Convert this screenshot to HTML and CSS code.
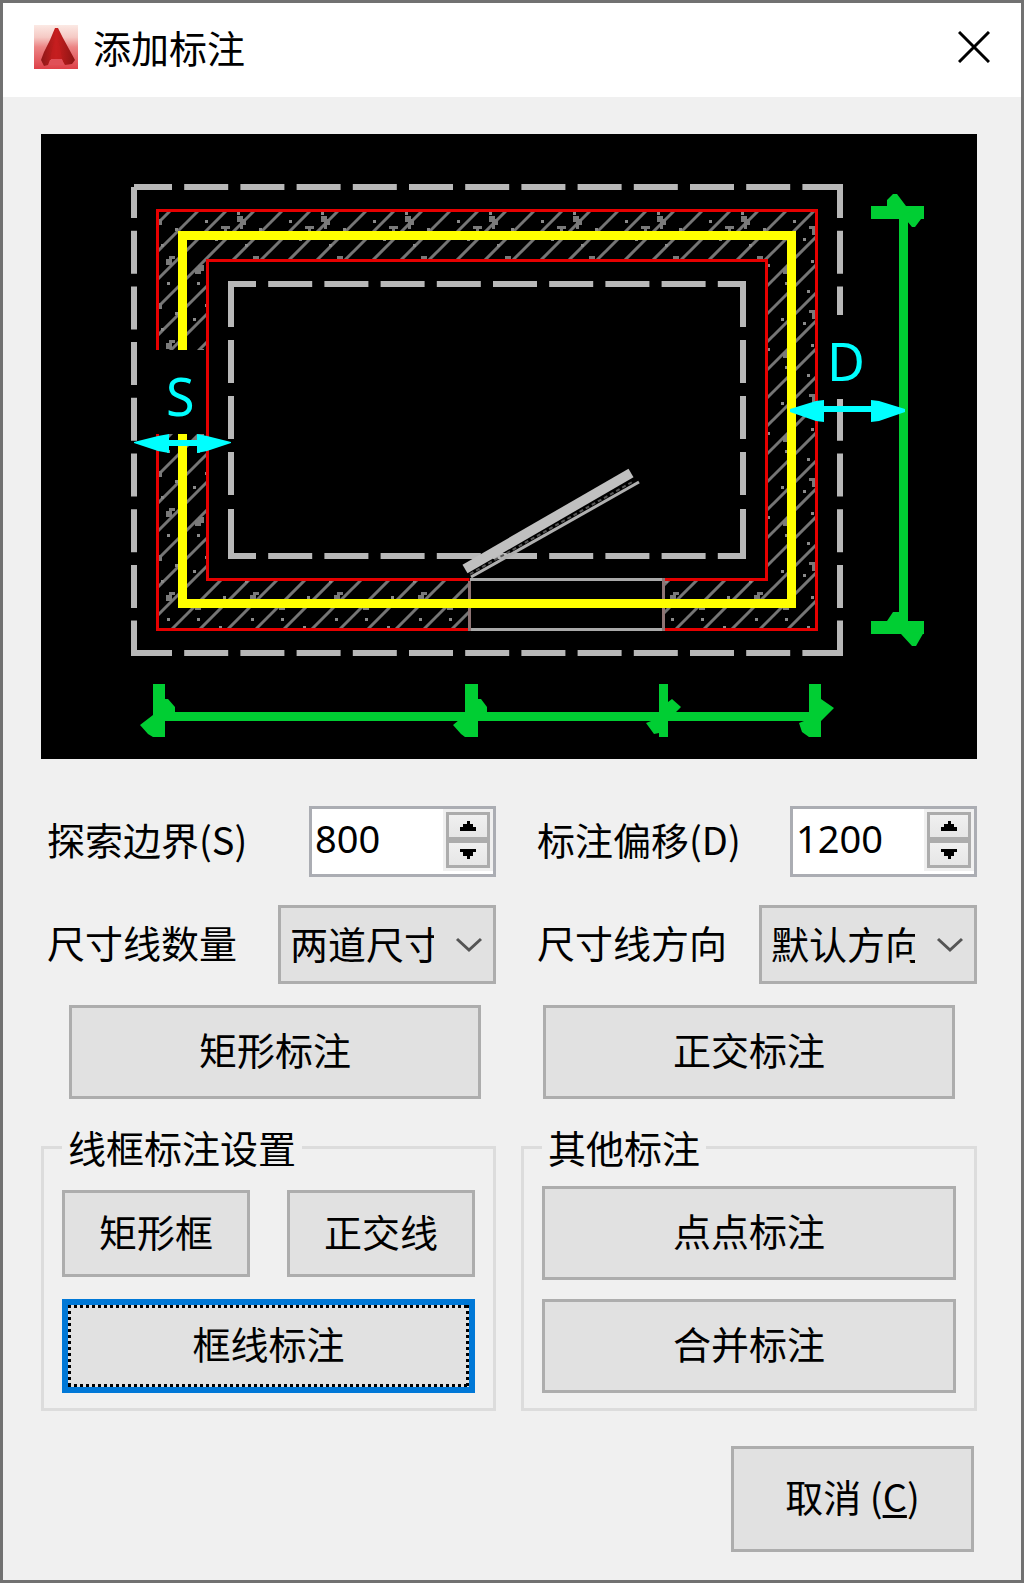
FILE: index.html
```html
<!DOCTYPE html>
<html lang="zh-CN">
<head>
<meta charset="utf-8">
<meta name="viewport" content="width=device-width, initial-scale=1">
<title>添加标注</title>
<link rel="stylesheet" href="styles.css">
</head>
<body>
<div class="dialog">
  <header class="titlebar">
    <svg class="app-icon" viewBox="0 0 44 44" aria-hidden="true">
      <defs>
        <linearGradient id="iconBg" x1="0" y1="0" x2="0" y2="1">
          <stop offset="0" stop-color="#fbe9e4"/><stop offset=".28" stop-color="#f5c9c4"/>
          <stop offset=".5" stop-color="#ec8585"/><stop offset="1" stop-color="#de4048"/>
        </linearGradient>
        <linearGradient id="iconA" x1="0" y1="0" x2="1" y2="0">
          <stop offset="0" stop-color="#8e1818"/><stop offset=".45" stop-color="#c81e1e"/><stop offset="1" stop-color="#8a1414"/>
        </linearGradient>
      </defs>
      <rect width="44" height="44" fill="url(#iconBg)"/>
      <path d="M21 3h3l5 10 6 11 6 11-3 4-7 1-3-5H16l-2 5-4 1-3-6 3-8 6-12z" fill="url(#iconA)"/>
      <path d="M22 10l4 12 2 12H16l3-13z" fill="#c41e20" opacity=".6"/>
      <path d="M17 34h11l2 6H15z" fill="#e05058"/>
    </svg>
    <h1 class="title">添加标注</h1>
    <button class="close" type="button" aria-label="关闭">
      <svg viewBox="0 0 32 32" aria-hidden="true"><path d="M1 1l30 30M31 1L1 31" stroke="#000" stroke-width="3" fill="none"/></svg>
    </button>
  </header>

  <main class="content">
    <svg class="preview" viewBox="41 134 936 625" role="img" aria-label="标注预览">
      <defs>
        <pattern id="hatch" width="84" height="84" patternUnits="userSpaceOnUse" x="17" y="0">
          <path d="M-3 3L3-3M-3 31L31-3M-3 59L59-3M-3 87L87-3M25 87L87 25M53 87L87 53M81 87L87 81" stroke="#757575" stroke-width="3" fill="none"/>
          <path d="M12 30h3v3h-3zM38 8h3v3h-3zM44 14h3v3h-3zM66 30h3v3h-3zM20 52h3v3h-3zM74 60h3v3h-3zM30 70h3v3h-3zM52 44h3v3h-3zM8 66h3v3H8zM60 76h3v3h-3zM34 38h3v3h-3zM78 12h3v3h-3z" fill="#8a8a8a"/>
          <path d="M52 48h6v3h3v6h-3v4h-3v-7h-3zM10 16h3v-3h6v6h-3v3h-6zM36 58h9v3h-3v6h-3v-6h-3zM68 4h6v3h-3v6h-6V7h3z" fill="#7a7a7a"/>
        </pattern>
      </defs>
      <rect x="41" y="134" width="936" height="625" fill="#000"/>

      <path fill="url(#hatch)" fill-rule="evenodd" d="M157 210H817V630H157zM208 261V580H767V261z"/>
      <rect x="470" y="577" width="194" height="56" fill="#000"/>

      <g stroke="#e60000" stroke-width="3" fill="none">
        <path d="M469.500 629.500H157.500V210.500H816.500V629.500H663.500"/>
        <path d="M469.500 579.500H207.500V260.500H766.500V579.500H663.500"/>
      </g>
      <g fill="none" stroke-width="3">
        <path d="M470 579.500H664M470 629.500H664" stroke="#a9a9a9"/>
        <path d="M469.500 581V631M663.500 578V631" stroke="#8f7474"/>
      </g>

      <g stroke="#b8b8b8" stroke-width="6" fill="none">
        <path d="M134 187H843M134 653H843" stroke-dasharray="44 12.200" stroke-dashoffset="6"/>
        <path d="M134 187V656M840 187V656" stroke-dasharray="43 12.700" stroke-dashoffset="12"/>
        <path d="M228 284H746M228 556H746" stroke-dasharray="44 12.200" stroke-dashoffset="16"/>
        <path d="M231 284V505M743 284V505" stroke-dasharray="43 13"/>
        <path d="M231 509V559M743 509V559"/>
      </g>

      <path d="M182.500 603.500V235.500H791.500V603.500z" fill="none" stroke="#ff0" stroke-width="9"/>

      <rect x="154" y="350" width="52" height="84" fill="#000"/>
      <rect x="826" y="315" width="44" height="84" fill="#000"/>

      <path d="M465 569L631 473" stroke="#c0c0c0" stroke-width="10"/>
      <path d="M471 577L639 482" stroke="#b0b0b0" stroke-width="3"/>
      <path d="M470 574L634 481" stroke="#555" stroke-width="2" stroke-dasharray="4 3"/>

      <g fill="#00ce33">
        <path d="M899 212h9v415h-9zM871 206h53v13h-53zM871 621h53v13h-53z"/>
        <path d="M887 206v-6l6-6h4l9 12zM924 206v9l-9 12h-3l-10-12z"/>
        <path d="M887 621l6-9h7v9zM901 634l11 12h4l8-14z"/>
        <path d="M159 712h654v9H159z"/>
        <path d="M153 684h12v53h-12zM465 684h13v53h-13zM659 684h9v53h-9zM809 684h12v53h-12z"/>
        <path d="M165 699h3l7 8v5h-10zM153 715l-13 10 8 9 5 3z"/>
        <path d="M478 699h3l6 8v5h-9zM465 715l-12 10 8 9 4 3z"/>
        <path d="M668 702l4-3 9 8-5 5h-8zM659 718l-13 5 8 11 5-1z"/>
        <path d="M821 699l13 9-13 13zM809 719l-10 4 3 9 7 5z"/>
      </g>
      <g fill="#0ff">
        <path d="M134 442l24-6 11-2v19l-11-2-24-8zM231 442l-24-6-10-2v19l10-2 24-8zM169 440h28v6h-28z"/>
        <path d="M790 409l26-8 8-1v22l-8-1-26-9zM905 409l-26-8-8-1v22l8-1 26-9zM824 406h47v6h-47z"/>
      </g>
      <text class="mark" x="166" y="416">S</text>
      <text class="mark" x="827" y="381">D</text>
    </svg>

    <div class="columns fields">
      <div class="field">
        <label for="bound">探索边界(S)</label>
        <div class="spin">
          <input id="bound" type="number" value="800">
          <span class="steps">
            <button type="button" aria-label="增加"><svg viewBox="0 0 16 10" aria-hidden="true"><path d="M7 0h3v3h3v3h3v4H0V6h3V3h4z"/></svg></button>
            <button type="button" aria-label="减少"><svg viewBox="0 0 16 10" aria-hidden="true"><path d="M0 0h16v3h-3v4h-3v3H7V7H3V3H0z"/></svg></button>
          </span>
        </div>
      </div>
      <div class="field inset">
        <label for="offset">标注偏移(D)</label>
        <div class="spin">
          <input id="offset" type="number" value="1200">
          <span class="steps">
            <button type="button" aria-label="增加"><svg viewBox="0 0 16 10" aria-hidden="true"><path d="M7 0h3v3h3v3h3v4H0V6h3V3h4z"/></svg></button>
            <button type="button" aria-label="减少"><svg viewBox="0 0 16 10" aria-hidden="true"><path d="M0 0h16v3h-3v4h-3v3H7V7H3V3H0z"/></svg></button>
          </span>
        </div>
      </div>
      <div class="field">
        <label for="count">尺寸线数量</label>
        <div class="combo">
          <select id="count"><option>两道尺寸</option></select>
          <svg viewBox="0 0 28 16" aria-hidden="true"><path d="M2 2l12 11L26 2"/></svg>
        </div>
      </div>
      <div class="field inset">
        <label for="direction">尺寸线方向</label>
        <div class="combo">
          <select id="direction"><option>默认方向</option></select>
          <svg viewBox="0 0 28 16" aria-hidden="true"><path d="M2 2l12 11L26 2"/></svg>
        </div>
      </div>
    </div>

    <div class="columns actions">
      <div class="action-left"><button class="btn" type="button">矩形标注</button></div>
      <div class="action-right"><button class="btn" type="button">正交标注</button></div>
    </div>

    <div class="columns groups">
      <fieldset class="group">
        <legend>线框标注设置</legend>
        <div class="frame-tools">
          <button class="btn small" type="button">矩形框</button>
          <button class="btn small" type="button">正交线</button>
          <button class="btn focused" type="button">框线标注</button>
        </div>
      </fieldset>
      <fieldset class="group">
        <legend>其他标注</legend>
        <div class="other-tools">
          <button class="btn" type="button">点点标注</button>
          <button class="btn" type="button">合并标注</button>
        </div>
      </fieldset>
    </div>

    <footer class="footer">
      <button class="btn cancel" type="button">取消 (<u>C</u>)</button>
    </footer>
  </main>
</div>
</body>
</html>
```
FILE: styles.css
```css
* {
  box-sizing: border-box;
}

body {
  margin: 0;
  background: #f0f0f0;
  color: #000;
  font: 38px/44px "Noto Sans CJK SC", "Noto Sans", sans-serif;
}

button,
input,
select {
  margin: 0;
  padding: 0;
  border-radius: 0;
  color: inherit;
  font: inherit;
}

.dialog {
  min-height: 100vh;
  border: 3px solid #717171;
}

.titlebar {
  display: flex;
  align-items: center;
  height: 94px;
  padding: 0 21px 6px 31px;
  background: #fff;
}

.app-icon {
  width: 44px;
  height: 44px;
}

.title {
  flex: 1;
  margin: 0 0 0 15px;
  font-size: 38px;
  font-weight: 400;
}

.close {
  display: flex;
  padding: 10px;
  border: 0;
  background: none;
}

.close svg {
  width: 32px;
  height: 32px;
}

.content {
  padding: 37px 44px 28px 38px;
}

.preview {
  display: block;
  width: 100%;
  height: auto;
}

.mark {
  fill: #0ff;
  font: 52px "Noto Sans", sans-serif;
}

.columns {
  display: grid;
  grid-template-columns: 455fr 456fr;
  column-gap: 25px;
}

.fields {
  margin-top: 47px;
  row-gap: 28px;
}

.field {
  display: flex;
  align-items: center;
  justify-content: space-between;
  padding-left: 6px;
}

.inset {
  padding-left: 16px;
}

.field label {
  padding-bottom: 6px;
  white-space: nowrap;
}

.spin {
  display: flex;
  align-items: flex-start;
  width: 187px;
  height: 71px;
  border: 3px solid #abadb3;
  background: #fff;
}

.spin input {
  flex: 1;
  min-width: 0;
  height: 100%;
  padding: 0 0 8px 3px;
  border: 0;
  outline: 0;
  background: none;
  font-family: "Noto Sans", sans-serif;
  appearance: textfield;
}

.spin input::-webkit-inner-spin-button {
  appearance: none;
  margin: 0;
}

.steps {
  display: flex;
  flex-direction: column;
  width: 50px;
  padding: 3px;
  background: #f0f0f0;
}

.steps button {
  display: flex;
  align-items: center;
  justify-content: center;
  height: 28px;
  border: 3px solid #acacac;
  background: linear-gradient(#f0f0f0, #e6e6e6);
}

.steps svg {
  width: 16px;
  height: 10px;
}

.combo {
  display: grid;
  align-items: center;
  width: 218px;
  height: 79px;
}

.combo select,
.combo svg {
  grid-area: 1 / 1;
}

.combo select {
  width: 100%;
  height: 100%;
  padding: 0 59px 4px 9px;
  border: 3px solid #adadad;
  background: #e1e1e1;
  appearance: none;
}

.combo svg {
  justify-self: end;
  width: 28px;
  height: 16px;
  margin-right: 13px;
  fill: none;
  stroke: #555;
  stroke-width: 3px;
  pointer-events: none;
}

.btn {
  display: block;
  width: 100%;
  height: 94px;
  padding-bottom: 6px;
  border: 3px solid #adadad;
  background: #e1e1e1;
  text-align: center;
}

.actions {
  margin-top: 21px;
}

.action-left {
  padding: 0 15px 0 28px;
}

.action-right {
  padding: 0 22px;
}

.groups {
  margin-top: 26px;
}

.group {
  min-width: 0;
  margin: 0;
  padding: 0 18px 15px;
  border: 3px solid #dcdcdc;
}

.group legend {
  padding: 0 6px;
}

.frame-tools {
  display: grid;
  grid-template-columns: 1fr 1fr;
  gap: 22px 37px;
  padding-top: 21px;
}

.small {
  height: 87px;
}

.focused {
  grid-column: 1 / -1;
  border: 6px solid #0078d7;
  outline: 0;
  background:
    repeating-linear-gradient(90deg, #000 0 3px, transparent 3px 6px) top / 100% 3px no-repeat padding-box,
    repeating-linear-gradient(90deg, #000 0 3px, transparent 3px 6px) bottom / 100% 3px no-repeat padding-box,
    repeating-linear-gradient(#000 0 3px, transparent 3px 6px) left / 3px 100% no-repeat padding-box,
    repeating-linear-gradient(#000 0 3px, transparent 3px 6px) right / 3px 100% no-repeat padding-box,
    #e1e1e1;
}

.other-tools {
  display: grid;
  gap: 19px;
  padding-top: 17px;
}

.footer {
  display: flex;
  justify-content: flex-end;
  margin-top: 35px;
  padding-right: 3px;
}

.cancel {
  width: 243px;
  height: 106px;
}

.cancel u {
  text-decoration-thickness: 3px;
  text-underline-offset: 3px;
}
```
